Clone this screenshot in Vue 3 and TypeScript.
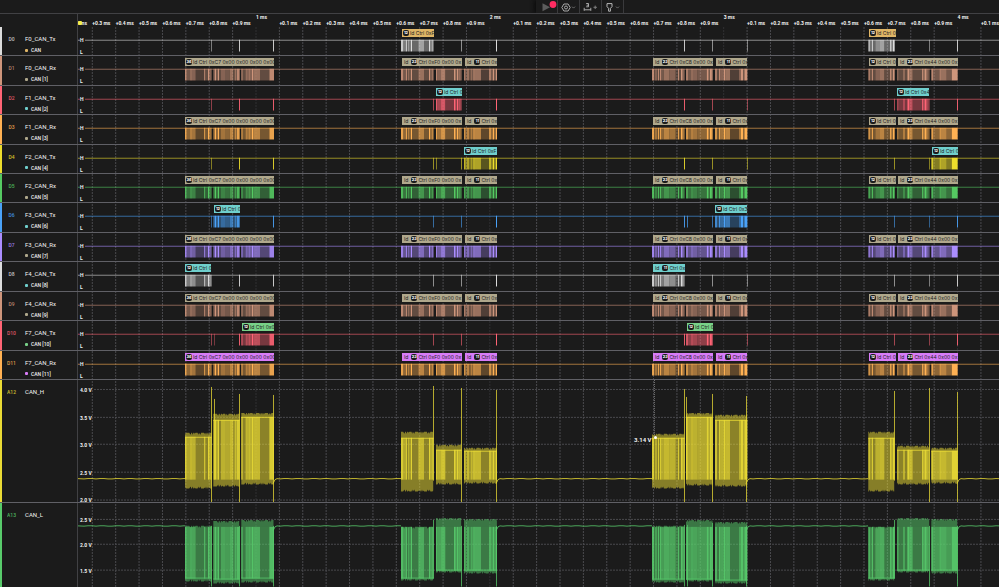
<script setup lang="ts">
type Stripe = [start: number, end: number, level: number]
type Pulse = [x: number, level: number]
interface Tag { from: number; to: number; badge: string; lead: string; text: string }
interface Digital {
  id: string; name: string; decoder: string
  color: string; tagColor: string
  stripes: Stripe[]; pulses: Pulse[]; tags: Tag[]
}
interface Envelope { top: number; bottom: number; inner: number }
interface Spike { x: number; from: number; to: number }
interface Analog {
  id: string; name: string; color: string; height: number; kind: string
  volts: { label: string; y: number }[]
  base: number; envelopes: Envelope[]; spikes: Spike[]
}

// Timeline geometry, in time units of the plot
const X0 = 78
const SPAN = 921
const STEP = 23.385
const pct = (x: number) => ((x - X0) / SPAN) * 100 + '%'

const ticks = Array.from({ length: 41 }, (_, i) => {
  const k = i + 2
  return {
    x: 256 + (k - 10) * STEP,
    major: k % 10 === 0,
    label: k % 10 === 0 ? `${k / 10} ms` : `+0.${k % 10} ms`,
  }
}).filter((t) => t.x < X0 + SPAN)

// A frame is described in thirds of a unit: origin, first edge, then [next edge, level]
function frame(origin: number, start: number, parts: number[]): Stripe[] {
  const out: Stripe[] = []
  let at = start
  for (let i = 0; i < parts.length; i += 2) {
    out.push([(origin + at) / 3, (origin + parts[i]) / 3, parts[i + 1] / 10])
    at = parts[i]
  }
  return out
}

const frames: Stripe[][] = [
  frame(0, 555, [560, 9, 571, 5, 575, 9, 587, 6, 612, 3, 616, 8, 624, 4, 628, 10, 635, 6]),
  frame(0, 640, [645, 6, 648, 10, 653, 5, 657, 10, 663, 4, 675, 6, 689, 5, 700, 7, 704, 3, 707, 10, 711, 5, 719, 9]),
  frame(0, 724, [728, 9, 737, 4, 740, 9, 746, 6, 749, 10, 756, 6, 760, 10, 780, 7, 808, 4, 822, 9]),
  frame(1170, 33, [40, 9, 47, 5, 51, 9, 55, 4, 58, 9, 62, 4, 66, 10, 85, 4, 102, 7, 117, 4, 121, 10, 125, 5, 128, 10, 131, 6]),
  frame(1170, 138, [142, 9, 153, 6, 166, 8, 192, 4, 197, 10, 201, 5, 204, 10, 208, 6, 211, 9, 215, 6]),
  frame(1170, 222, [227, 8, 231, 4, 238, 7, 242, 4, 245, 9, 250, 5, 254, 10, 273, 7, 297, 3, 303, 8, 308, 5, 312, 10, 317, 5, 321, 10]),
  frame(1920, 36, [42, 9, 46, 4, 50, 8, 54, 4, 57, 9, 60, 4, 64, 9, 71, 5, 88, 7, 107, 6, 114, 3, 117, 9, 123, 4, 128, 10, 134, 6]),
  frame(1920, 138, [144, 8, 154, 5, 158, 9, 172, 6, 200, 5, 206, 10, 210, 5, 213, 10, 218, 9]),
  frame(1920, 225, [231, 8, 237, 4, 241, 9, 251, 6, 256, 10, 270, 7, 297, 3, 302, 6, 309, 10, 313, 5, 322, 10]),
  frame(1920, 685, [691, 8, 695, 4, 699, 9, 706, 4, 720, 6, 733, 7, 750, 4, 755, 9, 759, 5, 764, 10]),
  frame(1920, 771, [776, 6, 790, 4, 794, 9, 802, 4, 807, 10, 818, 7, 846, 4, 850, 9, 855, 7, 860, 10, 866, 6, 869, 5]),
  frame(1920, 874, [880, 9, 898, 5, 903, 8, 920, 7, 935, 5, 953, 10]),
]

const acks: Pulse[] = [
  [211, 0.5], [239, 0.9], [273, 0.9],
  [433, 0.6], [461, 0.6], [496, 1],
  [684, 0.9], [712, 0.6], [747, 0.5],
  [894, 0.6], [929, 0.5], [957, 0.9],
]

const tag = (from: number, to: number, badge: string, lead: string, text: string): Tag => ({ from, to, badge, lead, text })

const rxTags: Tag[] = [
  tag(185, 274, '36', '', 'Id Ctrl 0xC7 0x00 0x00 0x00 0x00'),
  tag(402, 462, '23', 'Id', 'Ctrl 0xF0 0x00 0x'),
  tag(465, 497, '11', 'Id', 'Ctrl 0x'),
  tag(653, 713, '23', 'Id', 'Ctrl 0xC8 0x00 0x'),
  tag(716, 747, '11', 'Id', 'Ctrl 0x'),
  tag(869, 896, '12', '', 'Id Ctrl 0'),
  tag(898, 958, '23', 'Id', 'Ctrl 0x44 0x00 0x'),
]

function tx(id: string, name: string, decoder: string, color: string, tagColor: string, sent: number[], tags: Tag[], extra: Pulse[] = []): Digital {
  return {
    id, name, decoder, color, tagColor, tags,
    stripes: sent.flatMap((i) => frames[i]),
    pulses: acks.filter((_, i) => !sent.includes(i)).concat(extra),
  }
}
function rx(id: string, name: string, decoder: string, color: string, tagColor = '#b0a88c'): Digital {
  return { id, name, decoder, color, tagColor, tags: rxTags, stripes: frames.flat(), pulses: [] }
}

const white = '#dcdcdc', brown = '#ce957b', red = '#ff6475', orange = '#ffb153'
const yellow = '#ecdd2c', green = '#55c962', blue = '#4aa2f8', purple = '#ab8dff'
const cyan = '#6fcfcd', amber = '#dfb566', mint = '#78d188'

const digital: Digital[] = [
  tx('D0', 'F0_CAN_Tx', 'CAN', white, amber, [3, 9], [tag(402, 434, '12', '', 'Id Ctrl 0xF'), tag(869, 896, '12', '', 'Id Ctrl 0')]),
  rx('D1', 'F0_CAN_Rx', 'CAN [1]', brown),
  tx('D2', 'F1_CAN_Tx', 'CAN [2]', red, cyan, [4, 10], [tag(436, 462, '12', '', 'Id Ctrl 0'), tag(897, 929, '12', '', 'Id Ctrl 0x4')]),
  rx('D3', 'F1_CAN_Rx', 'CAN [3]', orange),
  tx('D4', 'F2_CAN_Tx', 'CAN [4]', yellow, cyan, [5, 11], [tag(464, 497, '12', '', 'Id Ctrl 0xF'), tag(932, 958, '12', '', 'Id Ctrl 0')], [[436, 0.5]]),
  rx('D5', 'F2_CAN_Rx', 'CAN [5]', green),
  tx('D6', 'F3_CAN_Tx', 'CAN [6]', blue, cyan, [1, 8], [tag(214, 240, '12', '', 'Id Ctrl 0'), tag(715, 747, '12', '', 'Id Ctrl 0x3')], [[687, 0.7]]),
  rx('D7', 'F3_CAN_Rx', 'CAN [7]', purple),
  tx('D8', 'F4_CAN_Tx', 'CAN [8]', white, cyan, [0, 6], [tag(185, 211, '12', '', 'Id Ctrl 0'), tag(653, 685, '11', 'Id', 'Ctrl 0x')]),
  rx('D9', 'F4_CAN_Rx', 'CAN [9]', brown),
  tx('D10', 'F7_CAN_Tx', 'CAN [10]', red, mint, [2, 7], [tag(242, 274, '12', '', 'Id Ctrl 0x0'), tag(687, 713, '12', '', 'Id Ctrl 0')], [[214, 0.4]]),
  rx('D11', 'F7_CAN_Rx', 'CAN [11]', orange, '#d87cf8'),
]

const env = (top: number, bottom: number, inner: number): Envelope => ({ top, bottom, inner })
const spike = (x: number, from: number, to: number): Spike => ({ x, from, to })

const analog: Analog[] = [
  {
    id: 'A12', name: 'CAN_H', color: '#eadb35', height: 123, base: 99, kind: 'high',
    volts: [
      { label: '4.0 V', y: 10 }, { label: '3.5 V', y: 38 }, { label: '3.0 V', y: 65 },
      { label: '2.5 V', y: 93 }, { label: '2.0 V', y: 121 },
    ],
    envelopes: [
      env(53, 109, 57), env(34, 107, 40), env(33, 105, 37),
      env(52, 112, 58), env(65, 105, 70), env(68, 104, 71),
      env(54, 109, 58), env(33, 106, 37), env(35, 107, 40),
      env(52, 112, 58), env(66, 105, 70), env(68, 104, 71),
    ],
    spikes: [
      spike(211, 7, 123), spike(214, 19, 100), spike(239, 14, 123), spike(273, 15, 123),
      spike(433, 6, 101), spike(461, 8, 123), spike(496, 10, 123),
      spike(684, 9, 123), spike(686, 17, 100), spike(712, 14, 123), spike(746, 16, 123),
      spike(894, 11, 101), spike(929, 8, 123), spike(957, 12, 123),
    ],
  },
  {
    id: 'A13', name: 'CAN_L', color: '#58cb6b', height: 84, base: 23, kind: 'low',
    volts: [{ label: '2.5 V', y: 17 }, { label: '2.0 V', y: 42 }, { label: '1.5 V', y: 68 }],
    envelopes: [
      env(23, 79, 75), env(18, 81, 76), env(17, 80, 75),
      env(24, 78, 75), env(15, 70, 67), env(16, 71, 67),
      env(23, 80, 76), env(17, 79, 76), env(19, 81, 77),
      env(24, 78, 75), env(15, 70, 67), env(16, 71, 67),
    ],
    spikes: [
      spike(211, 23, 84), spike(239, 23, 84), spike(273, 23, 84),
      spike(433, 17, 76), spike(461, 23, 84), spike(496, 23, 84),
      spike(684, 22, 84), spike(687, 22, 84), spike(712, 20, 84), spike(746, 23, 84),
      spike(894, 17, 76), spike(929, 23, 84), spike(957, 23, 84),
    ],
  },
]

// Noisy fringe of a burst, drawn behind its brighter core
function fringe(a: Analog, i: number) {
  const f = frames[i]
  const e = a.envelopes[i]
  const from = f[0][0]
  const to = f[f.length - 1][1]
  let top = ''
  let bottom = ''
  for (let x = from, n = i; x <= to; x += 0.7, n++) {
    const jag = (n * 7) % 11 < 2 ? 2 : (n * 3) % 7 === 0 ? 1 : 0
    top += `L${x.toFixed(1)} ${e.top + jag}`
    bottom = `L${x.toFixed(1)} ${e.bottom - jag}` + bottom
  }
  return 'M' + top.slice(1) + bottom + 'Z'
}
const core = (a: Analog, i: number) => {
  const e = a.envelopes[i]
  return a.kind === 'high'
    ? { y: e.inner, h: a.base - e.inner + 1 }
    : { y: a.base + 1, h: e.inner - a.base }
}

function baseline(a: Analog) {
  const gaps = [[78, 185], [274, 401], [497, 652], [747, 868], [958, 999]]
  return gaps.map(([from, to]) => {
    let d = from > 78
      ? `M${from - 1} ${a.base + 5}L${from + 1} ${a.base + 1}L${from + 3} ${a.base}`
      : `M${from} ${a.base}`
    for (let x = from + 6, n = 0; x < to; x += 4, n++) {
      d += `L${x} ${(a.base + ((n * 5) % 7 < 3 ? 0.3 : -0.1)).toFixed(1)}`
    }
    return d + `L${to} ${a.base}`
  }).join('')
}
</script>

<template>
  <main class="analyzer">
    <header class="toolbar">
      <div class="tools">
        <button class="tool run" type="button" aria-label="Start capture">
          <svg width="16" height="12" viewBox="0 0 16 12">
            <path d="M1.5 2.2 9 6.2 1.5 10.2z" fill="#5c5c5c" />
            <circle cx="12" cy="3.5" r="3.4" fill="#ff2c62" />
          </svg>
        </button>
        <button class="tool" type="button" aria-label="Device settings">
          <svg width="16" height="12" viewBox="0 0 16 12" fill="none" stroke="#a8a8a8" stroke-width="1">
            <path d="M2.9 3h4.2l2.1 3.5L7.1 10H2.9L.8 6.5z" stroke-linejoin="round" />
            <circle cx="5" cy="6.5" r="1.5" />
            <path d="m11 5.6 1.5 1.5L14 5.6" stroke="#707070" />
          </svg>
        </button>
        <button class="tool" type="button" aria-label="Add measurement">
          <svg width="16" height="12" viewBox="0 0 16 12" fill="none" stroke="#a8a8a8" stroke-width="1">
            <path d="M3.2 2.5h2.3v3.3H3.2M3.6 4.2h1.9M1.2 6.8v3M7.8 6.8v3M1.2 8.8h6.6" />
            <path d="M10.5 6.3h3.4M12.2 4.6V8" stroke="#808080" />
          </svg>
        </button>
        <button class="tool" type="button" aria-label="Add marker">
          <svg width="16" height="12" viewBox="0 0 16 12" fill="none" stroke="#b8b8b8" stroke-width="1">
            <path d="M2 2.6h5v3L5.4 7.4v2.8H3.6V7.4L2 5.6z" stroke-linejoin="round" />
            <path d="m11 5.6 1.5 1.5L14 5.6" stroke="#707070" />
          </svg>
        </button>
      </div>
    </header>

    <div class="ruler-row">
      <div class="corner"></div>
      <div class="ruler">
        <span
          v-for="t in ticks" :key="t.x" class="tick" :class="{ major: t.major }"
          :style="{ left: pct(t.x) }"
        >{{ t.label }}</span>
        <i class="flag"></i>
      </div>
    </div>

    <section class="channels">
      <svg class="grid" preserveAspectRatio="none" viewBox="78 0 921 560" aria-hidden="true">
        <line v-for="t in ticks" :key="t.x" :x1="t.x" :x2="t.x" y1="0" y2="560" :class="{ faint: t.major }" />
      </svg>

      <article v-for="c in digital" :key="c.id" class="row">
        <div class="info">
          <i class="stripe" :style="{ background: c.color }"></i>
          <span class="id" :style="{ color: c.color }">{{ c.id }}</span>
          <div class="labels">
            <span class="name">{{ c.name }}</span>
            <span class="decoder"><i class="dot" :style="{ background: c.tagColor }"></i>{{ c.decoder }}</span>
          </div>
        </div>
        <div class="plot">
          <svg class="wave" preserveAspectRatio="none" viewBox="78 0 921 29" :fill="c.color" aria-hidden="true">
            <rect x="78" y="13" width="921" height="1" opacity=".6" />
            <rect
              v-for="(s, i) in c.stripes" :key="'s' + i"
              :x="s[0]" y="13" :width="s[1] - s[0]" height="12" :opacity="s[2]"
            />
            <rect v-for="(p, i) in c.pulses" :key="'p' + i" :x="p[0]" y="13" width="1" height="12" :opacity="p[1]" />
          </svg>
          <span class="level high">H</span>
          <span class="level low">L</span>
          <span
            v-for="g in c.tags" :key="g.from" class="tag"
            :style="{ left: pct(g.from), width: ((g.to - g.from) / SPAN) * 100 + '%', background: c.tagColor }"
          >
            <span v-if="g.lead" class="lead">{{ g.lead }}</span>
            <b class="badge">{{ g.badge }}</b>
            <span>{{ g.text }}</span>
          </span>
        </div>
      </article>

      <article v-for="a in analog" :key="a.id" class="row">
        <div class="info">
          <i class="stripe" :style="{ background: a.color }"></i>
          <span class="id" :style="{ color: a.color }">{{ a.id }}</span>
          <div class="labels"><span class="name">{{ a.name }}</span></div>
        </div>
        <div class="plot">
          <svg class="wave" preserveAspectRatio="none" :viewBox="`78 0 921 ${a.height}`" :fill="a.color" aria-hidden="true">
            <line v-for="v in a.volts" :key="v.y" class="volt-line" x1="94" x2="999" :y1="v.y - 0.5" :y2="v.y - 0.5" />
            <path :d="baseline(a)" fill="none" :stroke="a.color" stroke-width="1" opacity=".8" />
            <template v-for="(f, i) in frames" :key="i">
              <path :d="fringe(a, i)" opacity=".52" />
              <rect
                v-for="(s, j) in f" :key="j" :x="s[0]" :width="s[1] - s[0]"
                :y="core(a, i).y" :height="core(a, i).h" :opacity="s[2] > 0.45 ? s[2] * 0.9 : 0.05"
              />
              <rect
                :x="f[0][0]" :width="f[f.length - 1][1] - f[0][0]"
                :y="a.envelopes[i].inner" height="1" opacity=".8"
              />
            </template>
            <rect v-for="s in a.spikes" :key="s.x" :x="s.x" width="1" :y="s.from" :height="s.to - s.from" opacity=".75" />
            <line v-if="a.kind === 'high'" class="cursor" x1="654.5" x2="654.5" y1="0" y2="56" />
          </svg>
          <span v-for="v in a.volts" :key="v.y" class="volt" :style="{ top: (v.y / a.height) * 100 + '%' }">{{ v.label }}</span>
          <template v-if="a.kind === 'high'">
            <i class="probe" :style="{ left: pct(655), top: (57 / a.height) * 100 + '%' }"></i>
            <span class="reading" :style="{ left: pct(634), top: (60 / a.height) * 100 + '%' }">3.14 V</span>
          </template>
        </div>
      </article>
    </section>
  </main>
</template>

<style>
body {
  margin: 0;
  background: #1b1b1b;
}
</style>

<style scoped>
.analyzer {
  display: flex;
  flex-direction: column;
  height: 100vh;
  overflow: hidden;
  background: #1b1b1b;
  color: #f2f2f2;
  font-family: Roboto, "Liberation Sans", sans-serif;
  font-size: 5px;
  line-height: 6px;
}
.toolbar {
  display: flex;
  flex: none;
  height: 13px;
  border-bottom: 1px solid #414144;
}
.toolbar::before {
  content: "";
  flex: 536 1 0;
}
.tools {
  display: flex;
  flex: 463 1 0;
  box-shadow: -2px 0 4px #0c0c0c;
  clip-path: inset(0 0 0 -8px);
}
.tool {
  display: flex;
  align-items: center;
  justify-content: flex-end;
  width: 22px;
  height: 13px;
  padding: 0 2px;
  box-sizing: border-box;
  border: 0;
  border-right: 1px solid #3a3a3c;
  background: none;
}
.tool.run {
  padding: 0;
}
.tool svg {
  flex: none;
}
.ruler-row {
  display: flex;
  flex: none;
  height: 13px;
}
.corner {
  flex: none;
  width: 77px;
  border-right: 1px solid #414144;
}
.ruler {
  position: relative;
  flex: 1;
  overflow: hidden;
}
.tick {
  position: absolute;
  top: 6px;
  font-weight: 700;
  white-space: nowrap;
}
.tick.major {
  top: 0;
}
.flag {
  position: absolute;
  left: 0;
  top: 7px;
  width: 4px;
  height: 4px;
  border-radius: 1px;
  background: #f4ee4c;
}
.channels {
  position: relative;
  display: grid;
  flex: 1;
  min-height: 0;
  grid-template-rows: repeat(12, minmax(0, 294fr)) minmax(0, 1235fr) minmax(0, 835fr);
}
.grid {
  position: absolute;
  left: 78px;
  top: 0;
  width: calc(100% - 78px);
  height: 100%;
}
.grid line {
  stroke: #4a4a4e;
  stroke-width: 1;
  stroke-dasharray: 2 1;
}
.grid line.faint {
  stroke: #303033;
}
.row {
  position: relative;
  display: flex;
  min-height: 0;
  border-bottom: 1px solid #606066;
}
.row:last-child {
  border-bottom: 0;
}
.info {
  display: flex;
  flex: none;
  width: 77px;
  border-right: 1px solid #414144;
}
.stripe {
  width: 2px;
}
.id {
  width: 19px;
  padding-top: 9px;
  text-align: center;
  font-weight: 500;
  opacity: 0.85;
}
.labels {
  display: flex;
  flex-direction: column;
  gap: 5px;
  padding: 8px 0 0 4px;
}
.name {
  font-size: 6px;
  line-height: 7px;
}
.decoder {
  display: flex;
  align-items: center;
  gap: 3px;
  font-weight: 500;
}
.dot {
  width: 3px;
  height: 3px;
  border-radius: 1px;
}
.plot {
  position: relative;
  flex: 1;
  min-width: 0;
}
.wave {
  position: absolute;
  left: 0;
  top: 0;
  width: 100%;
  height: 100%;
}
.level {
  position: absolute;
  left: 2px;
  padding-right: 1px;
  line-height: 5px;
  font-weight: 700;
}
.level.high {
  top: 11px;
  background: #1b1b1b;
}
.level.low {
  top: 23px;
}
.tag {
  position: absolute;
  top: 2px;
  display: flex;
  align-items: center;
  gap: 1px;
  height: 8px;
  box-sizing: border-box;
  padding-left: 1px;
  overflow: hidden;
  white-space: nowrap;
  color: #222;
  font-family: Inter, Roboto, sans-serif;
}
.lead {
  padding: 0 2px 0 1px;
}
.badge {
  flex: none;
  min-width: 6px;
  border-radius: 2px;
  background: #1c1c1c;
  color: #fff;
  text-align: center;
  font-size: 4px;
}
.volt-line {
  stroke: #4a4a4e;
  stroke-dasharray: 2 1;
}
.volt {
  position: absolute;
  left: 2px;
  margin-top: -3px;
  font-weight: 700;
}
.cursor {
  stroke: #707070;
  stroke-dasharray: 1 1;
}
.probe {
  position: absolute;
  width: 3px;
  height: 3px;
  margin: -1px;
  border-radius: 50%;
  background: #fff;
}
.reading {
  position: absolute;
  margin-top: -3px;
  font-size: 6px;
  font-weight: 700;
  white-space: nowrap;
}
</style>
